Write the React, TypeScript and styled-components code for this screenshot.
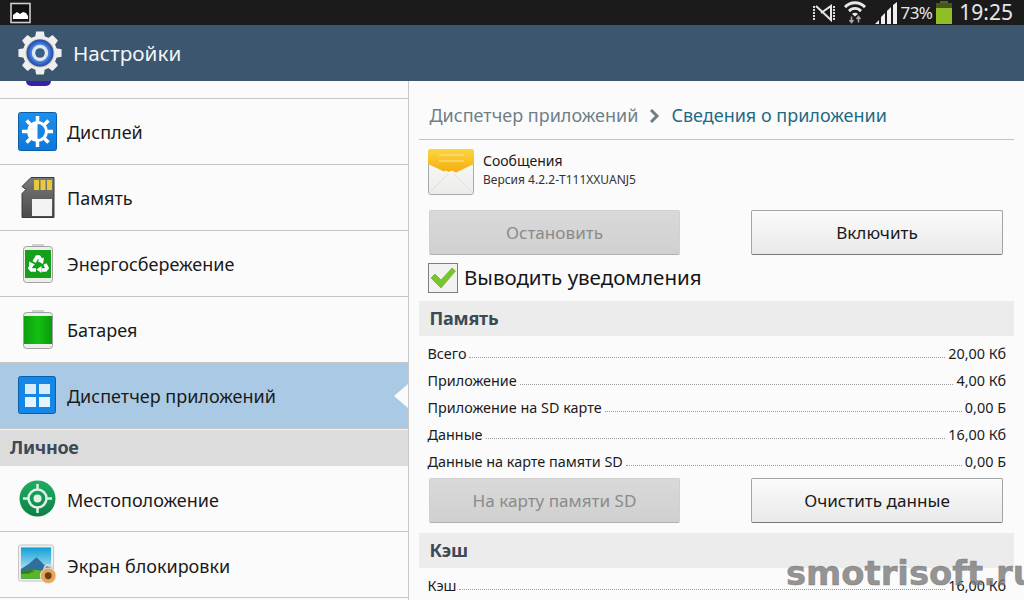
import React from "react";
import styled, { createGlobalStyle } from "styled-components";

const Global = createGlobalStyle`
  html, body { margin: 0; padding: 0; background: #fbfbfc; }
  #root { width: 1024px; height: 600px; overflow: hidden; }
`;

const Screen = styled.div`
  position: relative;
  width: 1024px;
  height: 600px;
  overflow: hidden;
  display: flex;
  flex-direction: column;
  font-family: "Noto Sans", "Open Sans", sans-serif;
  color: #141414;
  background: #fbfbfc;
`;

const StatusBar = styled.div`
  height: 25px;
  flex: none;
  background: #1b1b1b;
  display: flex;
  align-items: center;
  padding: 0 11px 0 10px;
  color: #e8e8e8;
`;
const StatusRight = styled.div`
  margin-left: auto;
  display: flex;
  align-items: center;
`;
const StatusGlyph = styled.svg<{ $left?: number }>`
  flex: none;
  margin-left: ${(p) => p.$left ?? 0}px;
`;
const Percent = styled.span`
  font-size: 17px;
  letter-spacing: -0.6px;
  margin: 0 4px 0 3px;
`;
const Clock = styled.span`
  font-size: 21px;
  margin-left: 7px;
  line-height: 25px;
`;

const Header = styled.div`
  height: 56px;
  flex: none;
  background: #3b566e;
  display: flex;
  align-items: center;
  padding-left: 17px;
  gap: 10px;
`;
const HeaderTitle = styled.h1`
  margin: 0;
  font-size: 20.7px;
  font-weight: 400;
  color: #f2f5f7;
`;

const Body = styled.div`
  flex: 1;
  display: flex;
  min-height: 0;
`;

const Sidebar = styled.div`
  width: 408px;
  flex: none;
  border-right: 1px solid #c8c8c8;
  display: flex;
  flex-direction: column;
  overflow: hidden;
`;
const Stub = styled.div`
  height: 17px;
  flex: none;
  border-bottom: 1px solid #c6c6c6;
  overflow: hidden;
  display: flex;
  padding-left: 26px;
  align-items: flex-start;
`;
const StubDot = styled.div`
  width: 25px;
  height: 5px;
  background: #3a20a8;
  border-radius: 0 0 13px 13px;
`;
const MenuRow = styled.div<{ $active?: boolean }>`
  position: relative;
  height: 65px;
  flex: none;
  box-sizing: content-box;
  display: flex;
  align-items: center;
  gap: 10px;
  padding-left: 18px;
  font-size: 18px;
  color: #1a1a1a;
  border-bottom: 1px solid #c6c6c6;
  background: ${(p) => (p.$active ? "#a9c9e4" : "transparent")};
`;
const RowLabel = styled.span<{ $low?: boolean }>`
  padding-top: ${(p) => (p.$low ? 2 : 0)}px;
`;
const Notch = styled.div`
  position: absolute;
  right: 0;
  top: 21px;
  width: 0;
  height: 0;
  border-style: solid;
  border-width: 12px 14px 12px 0;
  border-color: transparent #fbfbfc transparent transparent;
`;
const IconBox = styled.div`
  width: 39px;
  height: 39px;
  flex: none;
  display: flex;
  align-items: center;
  justify-content: center;
`;
const SideSection = styled.div`
  height: 36px;
  flex: none;
  box-sizing: content-box;
  background: #dcdcdc;
  color: #3c4a55;
  display: flex;
  align-items: center;
  padding-left: 10px;
  font-size: 18px;
  line-height: 34px;
  font-weight: 700;
  letter-spacing: -0.3px;
  border-top: 1px solid #f4f4f4;
`;
const SideSectionText = styled.span`
  margin-bottom: 2px;
`;

const Detail = styled.div`
  flex: 1;
  padding: 0 10px;
  display: flex;
  flex-direction: column;
  overflow: hidden;
`;
const Breadcrumb = styled.div`
  height: 59px;
  flex: none;
  box-sizing: border-box;
  border-bottom: 1px solid #c0c4c6;
  display: flex;
  align-items: center;
  padding: 10px 0 0 10.5px;
  font-size: 18px;
  line-height: 24px;
`;
const CrumbParent = styled.span`
  color: #6f7f88;
`;
const CrumbCurrent = styled.span`
  color: #1f6a83;
`;
const CrumbArrow = styled.svg`
  margin: 2px 11px 0 11px;
`;
const AppInfo = styled.div`
  height: 70px;
  flex: none;
  box-sizing: border-box;
  display: flex;
  align-items: flex-start;
  padding: 9px 0 0 9px;
  gap: 9px;
`;
const AppText = styled.div`
  display: flex;
  flex-direction: column;
  padding-top: 2px;
`;
const AppName = styled.div`
  font-size: 14px;
  line-height: 20px;
  color: #1a1a1a;
`;
const AppVersion = styled.div`
  font-size: 12px;
  line-height: 18px;
  color: #333;
`;
const ButtonRow = styled.div`
  display: flex;
  justify-content: space-between;
  flex: none;
  width: 574px;
  margin-left: 10px;
`;
const Btn = styled.div<{ $disabled?: boolean }>`
  width: ${(p) => (p.$disabled ? 251 : 252)}px;
  height: 45px;
  box-sizing: border-box;
  padding-bottom: 1px;
  border-radius: 2px;
  display: flex;
  align-items: center;
  justify-content: center;
  font-size: 17.1px;
  color: ${(p) => (p.$disabled ? "#8b8b8b" : "#1a1a1a")};
  background: ${(p) =>
    p.$disabled ? "linear-gradient(#d9d9d9,#d0d0d0)" : "linear-gradient(#fbfbfb,#e9e9e9)"};
  border: 1px solid ${(p) => (p.$disabled ? "#d0d0d0" : "#a4a4a4")};
  border-bottom-color: ${(p) => (p.$disabled ? "#b0b0b0" : "#777")};
`;
const CheckRow = styled.div`
  height: 46px;
  flex: none;
  box-sizing: border-box;
  display: flex;
  align-items: center;
  gap: 6px;
  padding-left: 9px;
  font-size: 20.5px;
  color: #151515;
`;
const CheckLabel = styled.span`
  margin-bottom: 2px;
`;
const CheckBox = styled.div`
  width: 28px;
  height: 28px;
  flex: none;
  border: 1px solid #7d7d7d;
  background: #f2f2f2;
  display: flex;
  align-items: center;
  justify-content: center;
`;
const SectionBar = styled.div`
  height: 35px;
  flex: none;
  box-sizing: border-box;
  background: #ececec;
  color: #3c4a55;
  display: flex;
  align-items: center;
  padding: 0 0 2px 10.5px;
  font-size: 18px;
  font-weight: 700;
  letter-spacing: -0.2px;
`;
const Rows = styled.div<{ $top: number }>`
  display: flex;
  flex-direction: column;
  flex: none;
  margin-top: ${(p) => p.$top}px;
`;
const DataRow = styled.div`
  height: 27px;
  display: flex;
  align-items: baseline;
  padding: 0 8px 0 8.5px;
  font-size: 14.4px;
  line-height: 27px;
  color: #1c1c1c;
`;
const Leader = styled.span`
  flex: 1;
  margin: 0 3px;
  border-bottom: 1px dotted #9a9a9a;
  transform: translateY(-1px);
`;
const Gap = styled.div<{ $h: number }>`
  height: ${(p) => p.$h}px;
  flex: none;
`;
const Watermark = styled.div`
  position: absolute;
  left: 786px;
  top: 554px;
  font-family: "DejaVu Sans", sans-serif;
  font-weight: 700;
  font-size: 33.8px;
  line-height: 40px;
  color: rgba(120, 120, 120, 0.78);
  -webkit-text-stroke: 0.6px rgba(120, 120, 120, 0.78);
  white-space: nowrap;
`;

const GearIcon = () => (
  <svg width="46" height="46" viewBox="0 0 48 48">
    <defs>
      <radialGradient id="gblue" cx="0.5" cy="0.5" r="0.5">
        <stop offset="0.5" stopColor="#5f9ae6" />
        <stop offset="1" stopColor="#1c47b0" />
      </radialGradient>
    </defs>
    <g fill="#eeefef">
      {[0, 45, 90, 135, 180, 225, 270, 315].map((a) => (
        <path key={a} d="M18.5 10L20 1.5h8L29.5 10z" transform={`rotate(${a} 24 24)`} />
      ))}
    </g>
    <circle cx="24" cy="24" r="18" fill="#eceded" />
    <circle cx="24" cy="24" r="15" fill="#c9c3ae" />
    <circle cx="24" cy="24" r="14" fill="url(#gblue)" />
    <circle cx="24" cy="24" r="8.5" fill="#dfe8f2" />
    <circle cx="24" cy="24" r="5" fill="#3a5e86" />
  </svg>
);

const DisplayIcon = () => (
  <svg width="39" height="39" viewBox="0 0 39 39">
    <defs>
      <linearGradient id="tile" x1="0" x2="0" y1="0" y2="1">
        <stop offset="0" stopColor="#1c8fec" />
        <stop offset="1" stopColor="#0f78d8" />
      </linearGradient>
    </defs>
    <rect x="0.5" y="0.5" width="38" height="38" rx="2" fill="url(#tile)" stroke="#0b5fa8" />
    <g stroke="#fff" strokeWidth="3.5">
      {[0, 45, 90, 135, 180, 225, 270, 315].map((a) => (
        <line key={a} x1="19.5" y1="4" x2="19.5" y2="10" transform={`rotate(${a} 19.5 19.5)`} />
      ))}
    </g>
    <circle cx="19.5" cy="19.5" r="10.5" fill="#fff" />
    <path d="M19.5 12a7.5 7.5 0 0 1 0 15z" fill="#1584e4" />
  </svg>
);

const MemoryIcon = () => (
  <svg width="34" height="41" viewBox="0 0 34 41">
    <defs>
      <linearGradient id="card" x1="0" x2="0" y1="0" y2="1">
        <stop offset="0" stopColor="#7a7a78" />
        <stop offset="1" stopColor="#4a4a48" />
      </linearGradient>
    </defs>
    <path d="M10 0.5h23v40H1v-24l4-4-4-3z" fill="url(#card)" stroke="#3a3a3a" />
    <rect x="13" y="3" width="5" height="10" fill="#e6c93f" />
    <rect x="19.5" y="3" width="5" height="10" fill="#e6c93f" />
    <rect x="26" y="3" width="5" height="10" fill="#e6c93f" />
    <rect x="11" y="22" width="20" height="17" fill="#f3f3f3" />
  </svg>
);

const BatteryShell = ({ children }: { children: React.ReactNode }) => (
  <svg width="30" height="39" viewBox="0 0 30 39">
    <rect x="9" y="0" width="12" height="3" fill="#cfd2cf" />
    <rect x="0.5" y="2.5" width="29" height="36" rx="3" fill="#eceeec" stroke="#a0a3a0" />
    {children}
  </svg>
);

const SaverIcon = () => (
  <BatteryShell>
    <rect x="2" y="6" width="26" height="28" fill="#14a01a" />
    <g fill="none" stroke="#fff" strokeWidth="3.6">
      <path d="M11 18l3-5h2l2 3" />
      <path d="M22 20l2 4-1.5 2h-4" />
      <path d="M13 26H8.5L7 24l2-4" />
    </g>
    <g fill="#fff">
      <path d="M21 13.5l-1 6.5-5.5-3z" />
      <path d="M18.5 22v7l-5-3.5z" />
      <path d="M6 17.5l6 3-5.5 3.5z" />
    </g>
  </BatteryShell>
);

const BatteryIcon = () => (
  <BatteryShell>
    <defs>
      <linearGradient id="bg" x1="0" x2="1" y1="0" y2="0">
        <stop offset="0" stopColor="#0fa010" />
        <stop offset="0.5" stopColor="#12c012" />
        <stop offset="1" stopColor="#0c9a0c" />
      </linearGradient>
    </defs>
    <rect x="1" y="6" width="28" height="28" fill="url(#bg)" />
  </BatteryShell>
);

const AppsIcon = () => (
  <svg width="39" height="39" viewBox="0 0 39 39">
    <rect x="0.5" y="0.5" width="37" height="37" rx="2" fill="#1587e6" stroke="#0b5fa8" />
    <rect x="7" y="8" width="11" height="10" fill="#d8ecfb" />
    <rect x="21" y="8" width="11" height="10" fill="#d8ecfb" />
    <rect x="7" y="21" width="11" height="10" fill="#e8f4fc" />
    <rect x="21" y="21" width="11" height="10" fill="#e8f4fc" />
  </svg>
);

const LocationIcon = () => (
  <svg width="37" height="37" viewBox="0 0 37 37">
    <defs>
      <linearGradient id="loc" x1="0" x2="0" y1="0" y2="1">
        <stop offset="0" stopColor="#1fae63" />
        <stop offset="1" stopColor="#0c8045" />
      </linearGradient>
    </defs>
    <circle cx="18.5" cy="18.5" r="18" fill="url(#loc)" />
    <circle cx="18.5" cy="18.5" r="9" fill="none" stroke="#dff2e6" strokeWidth="2.5" />
    <circle cx="18.5" cy="18.5" r="4" fill="#dff2e6" />
    <g stroke="#dff2e6" strokeWidth="2.5">
      <line x1="18.5" y1="4" x2="18.5" y2="10" />
      <line x1="18.5" y1="27" x2="18.5" y2="33" />
      <line x1="4" y1="18.5" x2="10" y2="18.5" />
      <line x1="27" y1="18.5" x2="33" y2="18.5" />
    </g>
  </svg>
);

const LockIcon = () => (
  <svg width="40" height="41" viewBox="0 0 40 41">
    <defs>
      <linearGradient id="sky" x1="0" x2="0" y1="0" y2="1">
        <stop offset="0" stopColor="#0f9fd8" />
        <stop offset="0.7" stopColor="#a9e0ee" />
      </linearGradient>
    </defs>
    <rect x="0.5" y="0.5" width="36" height="37" rx="2" fill="#f0f1f1" stroke="#c2c4c4" />
    <rect x="3" y="3" width="31" height="32" fill="url(#sky)" />
    <path d="M3 25l8-5 8-7 8 8 7 3v11H3z" fill="#2f6f9a" />
    <path d="M3 28q14-5 31 2v5H3z" fill="#59b52c" />
    <path d="M3 28q8-3 14-1l-6 3H3z" fill="#2f7d1e" />
    <circle cx="31" cy="32" r="8" fill="#e6a55a" stroke="#f3e6d6" />
    <circle cx="31" cy="32" r="3.5" fill="#6b3f1c" />
    <path d="M27 25a4 4 0 0 1 8 0" fill="none" stroke="#d6d8d8" strokeWidth="2" />
  </svg>
);

const MailIcon = () => (
  <svg width="46" height="46" viewBox="0 0 46 46">
    <defs>
      <linearGradient id="flap" x1="0" x2="0" y1="0" y2="1">
        <stop offset="0" stopColor="#fbd641" />
        <stop offset="1" stopColor="#f5ad0e" />
      </linearGradient>
      <linearGradient id="paper" x1="0" x2="0" y1="0" y2="1">
        <stop offset="0" stopColor="#fbfbfb" />
        <stop offset="1" stopColor="#ececea" />
      </linearGradient>
    </defs>
    <rect x="0.5" y="0.5" width="45" height="45" rx="2.5" fill="url(#paper)" stroke="#a9a9a9" />
    <path d="M1 44L20 25M45 44L26 25" fill="none" stroke="#e0e0e0" />
    <path d="M0 3q0-3 3-3h40q3 0 3 3v12L28 23.5l-4.5-2-2.5 1.5-3-1.5-2 1L0 15z" fill="url(#flap)" />
    <line x1="11" y1="6" x2="36" y2="6" stroke="#fde690" />
    <line x1="11" y1="12" x2="36" y2="12" stroke="#fde690" />
  </svg>
);

const Check = () => (
  <svg width="26" height="22" viewBox="0 0 26 22">
    <path d="M1 11l4-4 6 6L22 1l3.5 3L11 21z" fill="#79c52c" stroke="#5da71d" strokeWidth="0.6" />
  </svg>
);

const rows1: [string, string][] = [
  ["Всего", "20,00 Кб"],
  ["Приложение", "4,00 Кб"],
  ["Приложение на SD карте", "0,00 Б"],
  ["Данные", "16,00 Кб"],
  ["Данные на карте памяти SD", "0,00 Б"],
];

export default function App() {
  return (
    <Screen>
      <Global />
      <StatusBar>
        <StatusGlyph width="22" height="22" viewBox="0 0 22 22">
          <rect x="1" y="1.5" width="19" height="19" fill="#111" stroke="#cfcfcf" strokeWidth="1.6" />
          <path d="M3 17v-4l4-3 3 2 3-2 3 1 2 3v3z" fill="#fff" />
        </StatusGlyph>
        <StatusRight>
          <StatusGlyph width="24" height="18" viewBox="0 0 24 18">
            <path d="M2 2v14M22 2v14" stroke="#dcdcdc" strokeWidth="2" strokeDasharray="2 1" />
            <path d="M4 2l15 14V2L9 9" fill="none" stroke="#e6e6e6" strokeWidth="2" />
          </StatusGlyph>
          <StatusGlyph $left={7} width="24" height="23" viewBox="0 0 24 23">
            <path d="M1 5a15 15 0 0 1 22 0l-2 2.2a12 12 0 0 0-18 0zM5 9a9.5 9.5 0 0 1 14 0l-2 2.2a6.5 6.5 0 0 0-10 0zM9 13a4 4 0 0 1 6 0l-3 2.5z" fill="#e8e8e8" />
            <path d="M8.5 15.5v6M6.5 19l2 2.5 2-2.5M15.5 21.5v-6M13.5 18l2-2.5 2 2.5" stroke="#a8a8a8" strokeWidth="1.5" fill="none" />
          </StatusGlyph>
          <StatusGlyph $left={8} width="23" height="22" viewBox="0 0 23 22">
            <path d="M0 22l4-4v4zM6 22v-7l4-4v11zM12 22V9l4-4v17zM18 22V3l4-3v22z" fill="#f0f0f0" />
          </StatusGlyph>
          <Percent>73%</Percent>
          <StatusGlyph width="16" height="23" viewBox="0 0 16 23">
            <rect x="4" y="0" width="8" height="3" fill="#4c6b1d" />
            <rect x="0" y="2" width="16" height="6" fill="#45561f" />
            <rect x="0" y="7" width="16" height="16" fill="#8fbe26" />
          </StatusGlyph>
          <Clock>19:25</Clock>
        </StatusRight>
      </StatusBar>
      <Header>
        <GearIcon />
        <HeaderTitle>Настройки</HeaderTitle>
      </Header>
      <Body>
        <Sidebar>
          <Stub>
            <StubDot />
          </Stub>
          <MenuRow><IconBox><DisplayIcon /></IconBox><RowLabel>Дисплей</RowLabel></MenuRow>
          <MenuRow><IconBox><MemoryIcon /></IconBox><RowLabel>Память</RowLabel></MenuRow>
          <MenuRow><IconBox><SaverIcon /></IconBox><RowLabel>Энергосбережение</RowLabel></MenuRow>
          <MenuRow><IconBox><BatteryIcon /></IconBox><RowLabel>Батарея</RowLabel></MenuRow>
          <MenuRow $active>
            <IconBox><AppsIcon /></IconBox><RowLabel>Диспетчер приложений</RowLabel>
            <Notch />
          </MenuRow>
          <SideSection><SideSectionText>Личное</SideSectionText></SideSection>
          <MenuRow><IconBox><LocationIcon /></IconBox><RowLabel $low>Местоположение</RowLabel></MenuRow>
          <MenuRow><IconBox><LockIcon /></IconBox><RowLabel $low>Экран блокировки</RowLabel></MenuRow>
        </Sidebar>
        <Detail>
          <Breadcrumb>
            <CrumbParent>Диспетчер приложений</CrumbParent>
            <CrumbArrow width="11" height="14" viewBox="0 0 11 14">
              <path d="M2 1l6 6-6 6" fill="none" stroke="#6f7f88" strokeWidth="3" />
            </CrumbArrow>
            <CrumbCurrent>Сведения о приложении</CrumbCurrent>
          </Breadcrumb>
          <AppInfo>
            <MailIcon />
            <AppText>
              <AppName>Сообщения</AppName>
              <AppVersion>Версия 4.2.2-T111XXUANJ5</AppVersion>
            </AppText>
          </AppInfo>
          <ButtonRow>
            <Btn $disabled>Остановить</Btn>
            <Btn>Включить</Btn>
          </ButtonRow>
          <CheckRow>
            <CheckBox><Check /></CheckBox>
            <CheckLabel>Выводить уведомления</CheckLabel>
          </CheckRow>
          <SectionBar>Память</SectionBar>
          <Rows $top={4}>
            {rows1.map(([k, v]) => (
              <DataRow key={k}>
                {k}
                <Leader />
                {v}
              </DataRow>
            ))}
          </Rows>
          <Gap $h={3} />
          <ButtonRow>
            <Btn $disabled>На карту памяти SD</Btn>
            <Btn>Очистить данные</Btn>
          </ButtonRow>
          <Gap $h={10} />
          <SectionBar>Кэш</SectionBar>
          <Rows $top={4}>
            <DataRow>
              Кэш
              <Leader />
              16,00 Кб
            </DataRow>
          </Rows>
        </Detail>
      </Body>
      <Watermark>smotrisoft.ru</Watermark>
    </Screen>
  );
}
